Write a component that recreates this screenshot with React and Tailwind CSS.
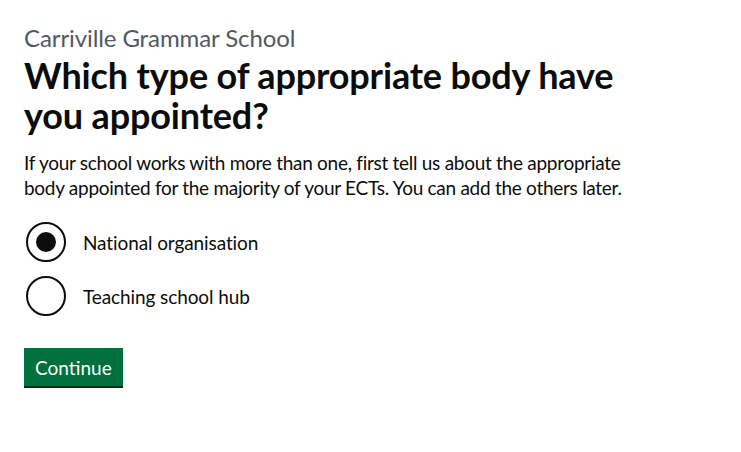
import React, { useState } from 'react';

const options = [
  { value: 'national', label: 'National organisation' },
  { value: 'tsh', label: 'Teaching school hub' }
];

const App = () => {
  const [selected, setSelected] = useState('national');

  return (
    <div className="min-h-screen bg-white text-[#0b0c0c] font-['Lato',sans-serif]">
      <main className="px-6 pt-[25px] w-[670px]">
        <span className="block text-[24px] leading-[25px] text-[#505a5f] mb-[5px] tracking-[-0.1px]">
          Carriville Grammar School
        </span>
        <fieldset>
          <legend className="mb-[15px]">
            <h1 className="text-[36px] leading-[40px] font-bold tracking-[-0.15px]">
              Which type of appropriate body have you appointed?
            </h1>
          </legend>
          <p className="text-[19px] leading-[25px] mb-[22px] tracking-[-0.28px]">
            If your school works with more than one, first tell us about the appropriate body appointed for the majority of your ECTs. You can add the others later.
          </p>
          <div className="flex flex-col gap-[14px]">
            {options.map((opt) => (
              <label key={opt.value} className="flex items-center h-[40px] cursor-pointer">
                <input
                  type="radio"
                  name="appropriate-body"
                  value={opt.value}
                  checked={selected === opt.value}
                  onChange={() => setSelected(opt.value)}
                  className="sr-only"
                />
                <span className="ml-[2px] w-[40px] h-[40px] rounded-full border-2 border-[#0b0c0c] flex items-center justify-center">
                  {selected === opt.value && (
                    <span className="w-[20px] h-[20px] rounded-full bg-[#0b0c0c]" />
                  )}
                </span>
                <span className="ml-[17px] text-[19px] leading-[25px] tracking-[-0.1px]">{opt.label}</span>
              </label>
            ))}
          </div>
        </fieldset>
        <button
          type="submit"
          className="mt-[32px] bg-[#00703c] text-white text-[19px] leading-[23px] px-[11px] pt-[8px] pb-[7px] shadow-[0_2px_0_#002d18]"
        >
          Continue
        </button>
      </main>
    </div>
  );
};

export default App;
